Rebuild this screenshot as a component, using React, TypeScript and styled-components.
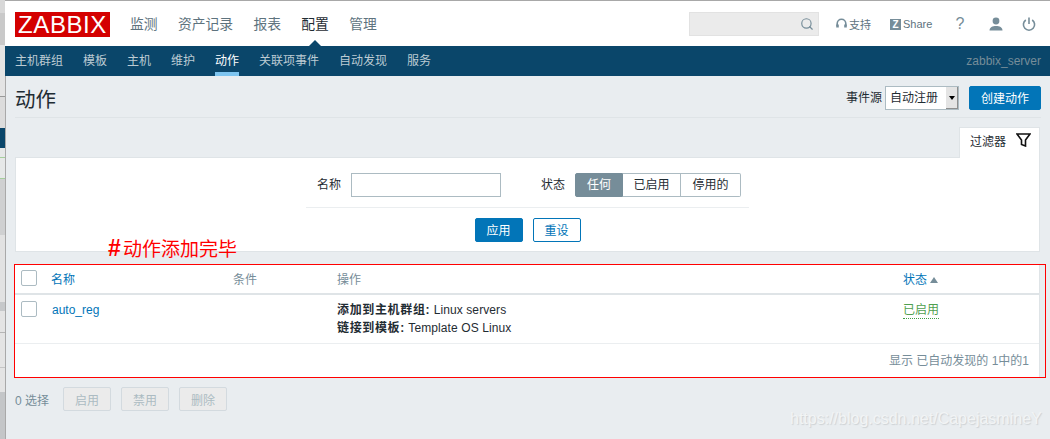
import styled, { createGlobalStyle } from 'styled-components';
import { Search } from 'lucide-react';

const GlobalStyle = createGlobalStyle`
  html, body {
    margin: 0;
    padding: 0;
    background: #e9edf0;
  }
  body {
    font-family: 'Liberation Sans', 'Noto Sans CJK SC', sans-serif;
    font-size: 12px;
    color: #1f2c33;
  }
`;

const Screen = styled.div`
  display: flex;
  width: 1050px;
  height: 439px;
  overflow: hidden;
  position: relative;
`;

const Strip = styled.div`
  width: 5px;
  flex: none;
  display: flex;
  flex-direction: column;
  background: #dcdcdc;
  border-right: 1px solid #a9a9a9;
`;

const StripBand = styled.div<{ $h: number; $c: string }>`
  height: ${p => p.$h}px;
  flex: none;
  background: ${p => p.$c};
`;

const Page = styled.div`
  flex: 1;
  min-width: 0;
  border-top: 1px solid #a8a8a8;
  margin-left: -1px;
  display: flex;
  flex-direction: column;
`;

const Header = styled.header`
  box-sizing: border-box;
  height: 45px;
  background: #fff;
  display: flex;
  align-items: center;
  padding: 1px 11px 0 10px;
`;

const Logo = styled.div`
  width: 95px;
  height: 25px;
  background: #d40000;
  color: #fff;
  font-size: 24px;
  line-height: 25px;
  text-align: center;
  letter-spacing: 0.6px;
  margin-right: 20px;
`;

const MainMenu = styled.nav`
  display: flex;
  gap: 20.3px;
  flex: 1;
  padding-top: 2px;
`;

const MainItem = styled.span<{ $active?: boolean }>`
  position: relative;
  font-size: 13.8px;
  line-height: 20px;
  color: ${p => (p.$active ? '#1f2c33' : '#5e737e')};

  ${p =>
    p.$active &&
    `&::after {
      content: '';
      position: absolute;
      left: 50%;
      bottom: -12px;
      margin-left: -7px;
      border: 7px solid transparent;
      border-top: 0;
      border-bottom-color: #0a466a;
    }`}
`;

const SearchBox = styled.div`
  box-sizing: border-box;
  width: 130px;
  height: 24px;
  background: #ebebeb;
  border: 1px solid #e2e2e2;
  display: flex;
  align-items: center;
  justify-content: flex-end;
  padding-right: 4px;
  color: #768d99;
  margin-right: 17px;
`;

const HeaderLink = styled.span<{ $w: number }>`
  width: ${p => p.$w}px;
  flex: none;
  display: flex;
  align-items: center;
  gap: 2px;
  font-size: 11px;
  color: #5e737e;
`;

const ZMark = styled.span`
  width: 11px;
  height: 11px;
  background: #768d99;
  color: #fff;
  font-size: 10px;
  font-weight: 700;
  line-height: 11px;
  text-align: center;
  flex: none;
`;

const HeaderIcon = styled.span<{ $w: number }>`
  width: ${p => p.$w}px;
  flex: none;
  display: flex;
  justify-content: center;
  align-items: center;
  color: #768d99;
  font-size: 16px;
  line-height: 16px;
`;

const SubNav = styled.nav`
  height: 30px;
  background: #0a466a;
  display: flex;
  align-items: stretch;
  padding: 0 9px 0 10px;
  gap: 20px;
`;

const SubItem = styled.span<{ $active?: boolean }>`
  line-height: 31px;
  color: ${p => (p.$active ? '#fff' : '#bccbd3')};
  box-shadow: ${p => (p.$active ? 'inset 0 -4px 0 #7dc4ef' : 'none')};
`;

const ServerName = styled.span`
  margin-left: auto;
  line-height: 31px;
  color: #768d99;
`;

const Content = styled.main`
  flex: 1;
  padding: 0 9px 0 10px;
  display: flex;
  flex-direction: column;
`;

const TitleRow = styled.div`
  box-sizing: content-box;
  height: 31px;
  padding-top: 10px;
  display: flex;
  align-items: flex-start;
  border-bottom: 1px solid #dfe4e7;
`;

const Title = styled.h1`
  margin: 0;
  padding-top: 2px;
  font-size: 20.5px;
  line-height: 24px;
  font-weight: 400;
  flex: 1;
  color: #1f2c33;
`;

const SourceLabel = styled.label`
  margin-right: 3px;
  line-height: 25px;
`;

const SelectBox = styled.div`
  box-sizing: border-box;
  width: 74px;
  height: 24px;
  border: 1px solid #acbbc2;
  background: #fff;
  display: flex;
  align-items: stretch;
  margin-right: 10px;
`;

const SelectText = styled.span`
  flex: 1;
  line-height: 23px;
  padding-left: 4px;
`;

const SelectArrow = styled.span`
  width: 12px;
  background: #e4e4e4;
  border-left: 1px solid #fff;
  box-shadow: inset -1px -1px 0 #8e8e8e;
  display: flex;
  align-items: center;
  justify-content: center;

  &::after {
    content: '';
    border: 3px solid transparent;
    border-top: 4px solid #000;
    border-bottom: 0;
  }
`;

const Button = styled.button<{ $outline?: boolean; $wide?: boolean }>`
  box-sizing: border-box;
  width: ${p => (p.$wide ? 72 : 48)}px;
  height: 24px;
  padding: 0 0 2px;
  border: 1px solid #0275b8;
  border-radius: 2px;
  background: ${p => (p.$outline ? '#fff' : '#0275b8')};
  color: ${p => (p.$outline ? '#0275b8' : '#fff')};
  font: inherit;
`;

const TabRow = styled.div`
  display: flex;
  justify-content: flex-end;
  padding-top: 9px;
  padding-right: 1px;
`;

const FilterTab = styled.div`
  box-sizing: border-box;
  width: 81px;
  height: 31px;
  background: #fff;
  border: 1px solid #dfe4e7;
  border-bottom: 0;
  display: flex;
  align-items: center;
  gap: 10px;
  padding: 0 0 6px 10px;
  margin-bottom: -1px;
  position: relative;
  z-index: 1;
`;

const FilterPanel = styled.section`
  box-sizing: border-box;
  height: 95px;
  margin-right: 1px;
  background: #fff;
  border: 1px solid #dfe4e7;
  display: flex;
  flex-direction: column;
  align-items: center;
  padding-top: 15px;
`;

const FilterFields = styled.div`
  box-sizing: border-box;
  width: 443px;
  height: 35px;
  border-bottom: 1px solid #ebeef0;
  display: flex;
  align-items: flex-start;
  padding-left: 11px;
`;

const FieldLabel = styled.label`
  line-height: 25px;
  margin-right: 10px;
`;

const TextInput = styled.input`
  box-sizing: border-box;
  width: 150px;
  height: 24px;
  border: 1px solid #acbbc2;
  margin: 0 40px 0 0;
  padding: 0;
`;

const Segments = styled.div`
  display: flex;
  height: 24px;
`;

const Segment = styled.span<{ $w: number; $on?: boolean }>`
  box-sizing: border-box;
  width: ${p => p.$w}px;
  line-height: 23px;
  text-align: center;
  border: 1px solid ${p => (p.$on ? '#768d99' : '#acbbc2')};
  border-left-width: ${p => (p.$on ? 1 : 0)}px;
  background: ${p => (p.$on ? '#768d99' : '#fff')};
  color: ${p => (p.$on ? '#fff' : '#1f2c33')};

  &:first-child {
    border-radius: 2px 0 0 2px;
  }
  &:last-child {
    border-radius: 0 2px 2px 0;
  }
`;

const FilterActions = styled.div`
  display: flex;
  gap: 10px;
  padding-top: 10px;
`;

const TablePanel = styled.section`
  margin: 13px 1px 0 0;
  height: 112px;
  background: #fff;
  border-right: 1px solid #dfe4e7;
`;

const Row = styled.div<{ $head?: boolean }>`
  display: grid;
  grid-template-columns: 36px 182px 104px 566px 1fr;
  box-sizing: border-box;
  height: ${p => (p.$head ? 30 : 49)}px;
  border-bottom: ${p => (p.$head ? '2px solid #dfe4e7' : '1px solid #ebeef0')};
  line-height: ${p => (p.$head ? 20 : 18)}px;
  padding-top: ${p => (p.$head ? 5 : 6)}px;
`;

const CheckCell = styled.div`
  padding-left: 6px;
`;

const CheckBox = styled.span`
  display: block;
  box-sizing: border-box;
  width: 16px;
  height: 16px;
  border: 1px solid #acbbc2;
  border-radius: 2px;
  background: #fff;
`;

const HeadLink = styled.span`
  color: #0275b8;
`;

const HeadMuted = styled.span`
  color: #768d99;
`;

const SortArrow = styled.i`
  display: inline-block;
  margin-left: 3px;
  border: 4px solid transparent;
  border-top: 0;
  border-bottom: 6px solid #768d99;
  vertical-align: 1px;
`;

const NameLink = styled.a`
  color: #0275b8;
  padding-left: 1px;
`;

const OperationLine = styled.div`
  letter-spacing: 0.1px;

  b {
    font-weight: 700;
    letter-spacing: 0.65px;
  }
`;

const Enabled = styled.span`
  color: #4f9f4f;
  border-bottom: 1px dotted #429e47;
  display: inline-block;
  line-height: 15px;
`;

const TableFooter = styled.div`
  height: 33px;
  line-height: 35px;
  text-align: right;
  padding-right: 10px;
  color: #768d99;
`;

const ActionBar = styled.div`
  display: flex;
  align-items: center;
  margin-top: 10px;
  gap: 10px;
`;

const SelectedCount = styled.span`
  width: 38px;
  color: #768d99;
`;

const DisabledButton = styled.button`
  box-sizing: border-box;
  width: 48px;
  height: 24px;
  padding: 0;
  border: 1px solid #d3dadf;
  border-radius: 2px;
  background: #ebebeb;
  color: #acbbc2;
  font: inherit;
`;

const RedBox = styled.div`
  position: absolute;
  left: 14px;
  top: 264px;
  width: 1032px;
  height: 114px;
  box-sizing: border-box;
  border: 1px solid #f00;
  pointer-events: none;
`;

const Note = styled.div`
  position: absolute;
  left: 108px;
  top: 236px;
  font-size: 19px;
  line-height: 24px;
  color: #f00;
  white-space: nowrap;

  b {
    display: inline-block;
    width: 15px;
    font-size: 23px;
  }
`;

const Watermark = styled.div`
  position: absolute;
  left: 790px;
  top: 409px;
  font-size: 16px;
  line-height: 20px;
  color: #f2f4f5;
  text-shadow: 1px 1px 1px #cdd1d4;
  white-space: nowrap;
`;

const FilterIcon = () => (
  <svg width="15" height="14" viewBox="0 0 15 14" fill="none" stroke="#111" strokeWidth="1.6">
    <path d="M1 1h13L9.5 7v6L5.5 11.5V7z" />
  </svg>
);

const HeadsetIcon = () => (
  <svg width="11" height="13" viewBox="0 0 11 13" fill="none" stroke="#768d99" strokeWidth="1.6">
    <path d="M1.2 8V5.5a4.3 4.3 0 0 1 8.6 0V8" />
    <path d="M1.5 6.5v3M9.5 6.5v3" strokeWidth="2.6" />
  </svg>
);

const UserIcon = () => (
  <svg width="14" height="14" viewBox="0 0 14 14" fill="#768d99">
    <circle cx="7" cy="4" r="3.4" />
    <path d="M0.5 13.5c0-3.4 3-4.6 6.5-4.6s6.5 1.2 6.5 4.6z" />
  </svg>
);

const PowerIcon = () => (
  <svg width="14" height="14" viewBox="0 0 14 14" fill="none" stroke="#768d99" strokeWidth="1.6">
    <path d="M3.8 3a5.6 5.6 0 1 0 6.4 0" />
    <path d="M7 0.5v6.5" />
  </svg>
);

// the sliver of the window behind the browser, on the left edge
const stripBands: [number, string][] = [
  [13, '#d8d8d8'],
  [32, '#c9c9c9'],
  [51, '#e4e4e4'],
  [1, '#999999'],
  [31, '#dcdcdc'],
  [20, '#0a466a'],
  [9, '#e6e8e8'],
  [1, '#a5cf9c'],
  [20, '#e6e8e8'],
  [1, '#a5cf9c'],
  [56, '#cfd0d1'],
  [67, '#e2e2e2'],
  [9, '#c6c8ca'],
  [21, '#e4e4e4'],
  [1, '#b5b5b5'],
  [34, '#e4e4e4'],
  [1, '#c5c5c5'],
  [24, '#e4e4e4'],
  [48, '#c4c6c8'],
];

export default function App() {
  return (
    <>
      <GlobalStyle />
      <Screen>
        <Strip>
          {stripBands.map(([h, c], i) => (
            <StripBand key={i} $h={h} $c={c} />
          ))}
        </Strip>
        <Page>
          <Header>
            <Logo>ZABBIX</Logo>
            <MainMenu>
              <MainItem>监测</MainItem>
              <MainItem>资产记录</MainItem>
              <MainItem>报表</MainItem>
              <MainItem $active>配置</MainItem>
              <MainItem>管理</MainItem>
            </MainMenu>
            <SearchBox>
              <Search size={14} strokeWidth={2} />
            </SearchBox>
            <HeaderLink $w={54}>
              <HeadsetIcon />
              支持
            </HeaderLink>
            <HeaderLink $w={57}>
              <ZMark>Z</ZMark>
              Share
            </HeaderLink>
            <HeaderIcon $w={26}>?</HeaderIcon>
            <HeaderIcon $w={46}>
              <UserIcon />
            </HeaderIcon>
            <HeaderIcon $w={20}>
              <PowerIcon />
            </HeaderIcon>
          </Header>
          <SubNav>
            <SubItem>主机群组</SubItem>
            <SubItem>模板</SubItem>
            <SubItem>主机</SubItem>
            <SubItem>维护</SubItem>
            <SubItem $active>动作</SubItem>
            <SubItem>关联项事件</SubItem>
            <SubItem>自动发现</SubItem>
            <SubItem>服务</SubItem>
            <ServerName>zabbix_server</ServerName>
          </SubNav>
          <Content>
            <TitleRow>
              <Title>动作</Title>
              <SourceLabel>事件源</SourceLabel>
              <SelectBox>
                <SelectText>自动注册</SelectText>
                <SelectArrow />
              </SelectBox>
              <Button $wide>创建动作</Button>
            </TitleRow>
            <TabRow>
              <FilterTab>
                过滤器
                <FilterIcon />
              </FilterTab>
            </TabRow>
            <FilterPanel>
              <FilterFields>
                <FieldLabel>名称</FieldLabel>
                <TextInput />
                <FieldLabel>状态</FieldLabel>
                <Segments>
                  <Segment $w={48} $on>
                    任何
                  </Segment>
                  <Segment $w={58}>已启用</Segment>
                  <Segment $w={60}>停用的</Segment>
                </Segments>
              </FilterFields>
              <FilterActions>
                <Button>应用</Button>
                <Button $outline>重设</Button>
              </FilterActions>
            </FilterPanel>
            <TablePanel>
              <Row $head>
                <CheckCell>
                  <CheckBox />
                </CheckCell>
                <HeadLink>名称</HeadLink>
                <HeadMuted>条件</HeadMuted>
                <HeadMuted>操作</HeadMuted>
                <HeadLink>
                  状态
                  <SortArrow />
                </HeadLink>
              </Row>
              <Row>
                <CheckCell>
                  <CheckBox />
                </CheckCell>
                <NameLink>auto_reg</NameLink>
                <span />
                <div>
                  <OperationLine>
                    <b>添加到主机群组:</b> Linux servers
                  </OperationLine>
                  <OperationLine>
                    <b>链接到模板:</b> Template OS Linux
                  </OperationLine>
                </div>
                <div>
                  <Enabled>已启用</Enabled>
                </div>
              </Row>
              <TableFooter>显示 已自动发现的 1中的1</TableFooter>
            </TablePanel>
            <ActionBar>
              <SelectedCount>0 选择</SelectedCount>
              <DisabledButton>启用</DisabledButton>
              <DisabledButton>禁用</DisabledButton>
              <DisabledButton>删除</DisabledButton>
            </ActionBar>
          </Content>
        </Page>
        <RedBox />
        <Note>
          <b>#</b>动作添加完毕
        </Note>
        <Watermark>https://blog.csdn.net/CapejasmineY</Watermark>
      </Screen>
    </>
  );
}
